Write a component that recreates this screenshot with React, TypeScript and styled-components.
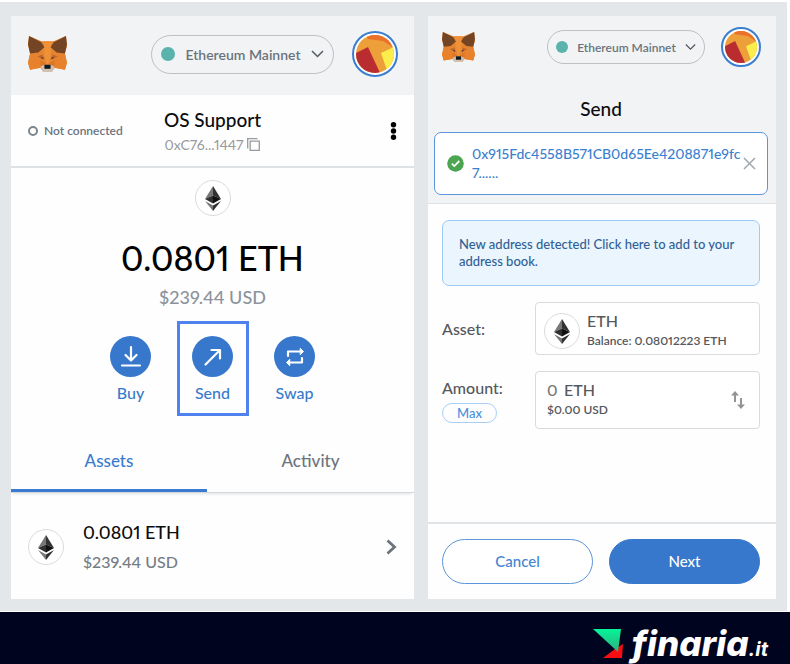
import React from "react";
import styled, { createGlobalStyle, css } from "styled-components";

const GlobalStyle = createGlobalStyle`
  *, *::before, *::after { box-sizing: border-box; }
  body {
    margin: 0;
    background: #fff;
    font-family: Lato, "Open Sans", sans-serif;
    font-variant-numeric: proportional-nums;
    color: #0b0c0e;
  }
  button, input { font: inherit; color: inherit; }
  button { padding: 0; border: 0; background: none; cursor: pointer; font-variant-numeric: proportional-nums; }
  h1, h2, p { margin: 0; font-weight: 500; }
  svg { display: block; flex: none; }
`;

const Frame = styled.main`
  display: grid;
  grid-template-columns: 403fr 348fr;
  gap: 14px;
  margin: 2px 3px 1px 0;
  padding: 14px 11px 12px;
  background: #e3e7ea;
`;

const Panel = styled.section`
  display: flex;
  flex-direction: column;
  min-width: 0;
  background: #fefefe;
`;

const TopBar = styled.header<{ $compact?: boolean }>`
  display: flex;
  align-items: center;
  justify-content: space-between;
  background: #f2f3f4;
  padding: ${(p) => (p.$compact ? "11px 15px 13px 14px" : "15px 16px 18px 17px")};
`;

const TopControls = styled.div<{ $compact?: boolean }>`
  display: flex;
  align-items: center;
  gap: ${(p) => (p.$compact ? 16 : 18)}px;
`;

const NetworkButton = styled.button<{ $compact?: boolean }>`
  display: flex;
  align-items: center;
  justify-content: space-between;
  border: 1px solid #bbc0c5;
  border-radius: 20px;
  color: #6a737d;
  font-weight: 600;
  ${(p) =>
    p.$compact
      ? css`width: 158px; height: 34px; padding: 0 8px; font-size: 12px;`
      : css`width: 183px; height: 39px; padding: 0 9px; font-size: 14px;`}
`;

const NetworkDot = styled.span<{ $compact?: boolean }>`
  width: ${(p) => (p.$compact ? 12 : 14)}px;
  height: ${(p) => (p.$compact ? 12 : 14)}px;
  border-radius: 50%;
  background: #5bb3ad;
`;

const AvatarButton = styled.button<{ $compact?: boolean }>`
  width: ${(p) => (p.$compact ? 40 : 46)}px;
  height: ${(p) => (p.$compact ? 40 : 46)}px;
  padding: 2px;
  border: 2px solid #3b7ed0;
  border-radius: 50%;
  background: #fff;
  overflow: hidden;
`;

const AccountBar = styled.div`
  display: grid;
  grid-template-columns: 1fr auto 1fr;
  align-items: center;
  height: 73px;
  padding: 0 17px;
  border-bottom: 2px solid #dfe2e4;
`;

const Status = styled.span`
  display: flex;
  align-items: center;
  gap: 6px;
  font-size: 12px;
  color: #6a737d;
  font-weight: 600;
  &::before {
    content: "";
    width: 10px;
    height: 10px;
    border: 2px solid #7d858d;
    border-radius: 50%;
  }
`;

const Account = styled.button`
  display: flex;
  flex-direction: column;
  align-items: center;
  padding-top: 2px;
`;

const AccountName = styled.span`
  font-size: 19px;
  line-height: 26px;
  font-weight: 500;
`;

const AccountAddress = styled.span`
  display: flex;
  align-items: center;
  gap: 4px;
  font-size: 14px;
  line-height: 24px;
  color: #989a9d;
`;

const MenuButton = styled.button`
  justify-self: end;
`;

const Overview = styled.div`
  display: flex;
  flex-direction: column;
  align-items: center;
  padding-top: 12px;
`;

const TokenCircle = styled.span`
  display: grid;
  place-items: center;
  flex: none;
  width: 36px;
  height: 36px;
  border: 1px solid #d9dbdd;
  border-radius: 50%;
  background: #fff;
`;

const Balance = styled.p`
  margin-top: 19px;
  font-size: 34px;
  line-height: 46px;
  font-weight: 500;
  color: #000;
`;

const FiatBalance = styled.p`
  margin-top: 4px;
  font-size: 18px;
  line-height: 24px;
  font-weight: 500;
  color: #8b939b;
`;

const Actions = styled.div`
  display: flex;
  justify-content: center;
  gap: 10px;
  margin-top: 12px;
`;

const ActionButton = styled.button<{ $selected?: boolean }>`
  display: flex;
  flex-direction: column;
  align-items: center;
  width: 72px;
  height: 95px;
  padding-top: 12px;
  border: 3px solid ${(p) => (p.$selected ? "#4f82ef" : "transparent")};
  color: #397bcb;
  font-size: 16px;
  line-height: 22px;
  font-weight: 500;
`;

const ActionIcon = styled.span`
  display: grid;
  place-items: center;
  width: 41px;
  height: 41px;
  margin-bottom: 5px;
  border-radius: 50%;
  background: #3778cd;
`;

const Tabs = styled.div`
  display: grid;
  grid-template-columns: 196fr 207fr;
  margin-top: 15px;
  border-bottom: 1px solid #d5d8da;
  box-shadow: 0 3px 3px -2px #dfe2e4;
`;

const Tab = styled.button<{ $active?: boolean }>`
  height: 61px;
  font-size: 17px;
  font-weight: 500;
  color: ${(p) => (p.$active ? "#397bd0" : "#6d747c")};
  border-bottom: 3px solid ${(p) => (p.$active ? "#397bd0" : "transparent")};
`;

const AssetRow = styled.button`
  display: flex;
  align-items: center;
  gap: 19px;
  height: 106px;
  padding: 2px 17px 0;
  text-align: left;
`;

const AssetText = styled.span`
  display: flex;
  flex: 1;
  flex-direction: column;
`;

const AssetAmount = styled.span`
  font-size: 18px;
  line-height: 29px;
  font-weight: 500;
  color: #0b0c0e;
`;

const AssetFiat = styled.span`
  font-size: 16px;
  line-height: 29px;
  font-weight: 500;
  color: #747c84;
`;

const Recipient = styled.div`
  padding: 0 8px 8px 6px;
  background: #f2f3f4;
  border-bottom: 1px solid #dfe1e3;
`;

const SendTitle = styled.h1`
  margin: 16px 0 10px;
  font-size: 19px;
  line-height: 26px;
  text-align: center;
`;

const RecipientBox = styled.div`
  display: flex;
  align-items: center;
  gap: 8px;
  height: 63px;
  padding: 0 11px 0 12px;
  border: 1px solid #5b95dc;
  border-radius: 7px;
  background: #fff;
`;

const RecipientAddress = styled.span`
  flex: 1;
  min-width: 0;
  padding-bottom: 2px;
  color: #3b7fd0;
  font-size: 14px;
  line-height: 19px;
  font-weight: 500;
`;

const SendForm = styled.form`
  display: flex;
  flex: 1;
  flex-direction: column;
`;

const Fields = styled.div`
  display: flex;
  flex: 1;
  flex-direction: column;
  gap: 16px;
  padding: 16px 16px 0 14px;
`;

const Notice = styled.button`
  height: 66px;
  padding: 0 16px;
  border: 1px solid #9ecbf3;
  border-radius: 7px;
  background: #eaf5fe;
  color: #315f95;
  font-size: 13px;
  line-height: 17px;
  font-weight: 500;
  text-align: left;
`;

const Field = styled.div`
  display: grid;
  grid-template-columns: 93fr 225fr;
  align-items: center;
`;

const FieldLabel = styled.label`
  display: block;
  font-size: 16px;
  line-height: 20px;
  font-weight: 500;
  color: #55585c;
`;

const MaxButton = styled.button`
  display: block;
  width: 55px;
  height: 20px;
  margin-top: 5px;
  border: 1px solid #a9cef3;
  border-radius: 10px;
  color: #4a8fda;
  font-size: 13px;
  line-height: 16px;
  font-weight: 500;
`;

const fieldBox = css`
  display: flex;
  align-items: center;
  min-width: 0;
  border: 1px solid #d9dbdd;
  border-radius: 4px;
  background: #fff;
  color: #55585c;
  text-align: left;
`;

const AssetPicker = styled.button`
  ${fieldBox}
  gap: 7px;
  height: 53px;
  padding: 5px 8px 0;
`;

const AmountBox = styled.div`
  ${fieldBox}
  justify-content: space-between;
  height: 58px;
  padding: 0 14px 0 11px;
`;

const FieldText = styled.span`
  display: flex;
  flex-direction: column;
`;

const Primary = styled.span`
  display: flex;
  font-size: 16px;
  line-height: 20px;
  font-weight: 500;
`;

const Secondary = styled.span`
  font-size: 12px;
  line-height: 20px;
  font-weight: 600;
`;

const AmountInput = styled.input`
  width: 17px;
  padding: 0;
  border: 0;
  outline: 0;
  background: none;
  color: #777;
`;

const FormFooter = styled.footer`
  display: grid;
  grid-template-columns: 1fr 1fr;
  gap: 16px;
  padding: 15px 16px 15px 14px;
  border-top: 2px solid #e1e4e6;
`;

const FormButton = styled.button<{ $primary?: boolean }>`
  height: 45px;
  padding-bottom: 2px;
  border: 1px solid ${(p) => (p.$primary ? "#3778cd" : "#5b95dc")};
  border-radius: 23px;
  background: ${(p) => (p.$primary ? "#3778cd" : "#fff")};
  color: ${(p) => (p.$primary ? "#fff" : "#4584d2")};
  font-size: 15px;
  font-weight: 500;
`;

const BrandBar = styled.footer`
  display: flex;
  align-items: center;
  justify-content: flex-end;
  gap: 8px;
  min-height: 52px;
  padding: 11px 22px 0 0;
  background: #01041f;
  color: #fff;
`;

const BrandName = styled.span`
  font-family: Inter, sans-serif;
  font-size: 35px;
  line-height: 41px;
  font-weight: 800;
  font-style: italic;
  small {
    font-size: 20px;
    line-height: 20px;
    font-weight: 700;
  }
`;

function Fox({ size }: { size: number }) {
  return (
    <svg width={size} height={size * 0.92} viewBox="0 0 38 35" aria-label="MetaMask" role="img">
      <path d="M1 0L13 5H25L37 0L38 10L36 17L38 26L36 33L26 31L23 35H15L12 31L2 33L0 26L2 17L0 9Z" fill="#e8862f" />
      <path d="M2 17L14 12L15 22L0 26ZM36 17L24 12L23 22L38 26Z" fill="#e58330" />
      <path d="M0 26L12 23L12 31L2 33ZM38 26L26 23L26 31L36 33Z" fill="#e9802a" />
      <path d="M12 23L18 27L12 31ZM26 23L20 27L26 31Z" fill="#dd7728" />
      <path d="M15 5H23L22 17L20 28H18L16 17Z" fill="#ee9239" />
      <path d="M1 0L13 6L16 11L10 16L2 17L0 8ZM37 0L25 6L22 11L28 16L36 17L38 8Z" fill="#734525" />
      <path d="M9 20L14 18L16 23ZM29 20L24 18L22 23Z" fill="#c4652a" />
      <path d="M12 21L15 21L15 23ZM26 21L23 21L23 23Z" fill="#4b3d38" />
      <path d="M12 30L16 28H22L26 30L23 35H15Z" fill="#cfc1b4" />
      <path d="M16 28H22L22 32H16Z" fill="#15181b" />
    </svg>
  );
}

function AvatarArt() {
  return (
    <svg width="100%" height="100%" viewBox="0 0 38 38" aria-hidden="true">
      <defs>
        <clipPath id="avatar-disc"><circle cx="19" cy="19" r="19" /></clipPath>
      </defs>
      <g clipPath="url(#avatar-disc)">
        <path d="M0 0H38V38H0Z" fill="#eda03a" />
        <path d="M10 0H38V13L27 6L12 4Z" fill="#ea702b" />
        <path d="M0 18L12 12L25 40H0Z" fill="#b92d30" />
        <path d="M25 18L38 12V36L32 38Z" fill="#fbee4c" />
      </g>
    </svg>
  );
}

function EthMark() {
  return (
    <svg width="16" height="25" viewBox="0 0 16 25" aria-hidden="true">
      <path d="M8 0L0 13L8 9.5Z" fill="#777" />
      <path d="M8 0L16 13L8 9.5Z" fill="#333" />
      <path d="M0 13L8 9.5V17.5Z" fill="#303030" />
      <path d="M16 13L8 9.5V17.5Z" fill="#111" />
      <path d="M0 15L8 19.5V25Z" fill="#777" />
      <path d="M16 15L8 19.5V25Z" fill="#303030" />
    </svg>
  );
}

function Token() {
  return <TokenCircle><EthMark /></TokenCircle>;
}

function WalletTopBar({ compact = false }: { compact?: boolean }) {
  return (
    <TopBar $compact={compact}>
      <Fox size={compact ? 33 : 39} />
      <TopControls $compact={compact}>
        <NetworkButton type="button" $compact={compact} aria-haspopup="listbox">
          <NetworkDot $compact={compact} />
          Ethereum Mainnet
          <svg width={compact ? 11 : 13} height="8" viewBox="0 0 13 8" fill="none" stroke="#535a61" strokeWidth="1.5" aria-hidden="true">
            <path d="M1 1L6.5 6.5L12 1" />
          </svg>
        </NetworkButton>
        <AvatarButton type="button" $compact={compact} aria-label="Account menu">
          <AvatarArt />
        </AvatarButton>
      </TopControls>
    </TopBar>
  );
}

const actions = [
  { label: "Buy", path: "M12 2V15M6.5 10L12 15.5L17.5 10M3 20.5H21" },
  { label: "Send", path: "M4.5 19.5L18.5 5.5M10.5 5H19V13.5", selected: true },
  { label: "Swap", path: "M5 11V6.5H19M5 17.5H19V13" },
];

function WalletPanel() {
  return (
    <Panel aria-label="Wallet">
      <WalletTopBar />
      <AccountBar>
        <Status>Not connected</Status>
        <Account type="button">
          <AccountName>OS Support</AccountName>
          <AccountAddress>
            0xC76...1447
            <svg width="13" height="13" viewBox="0 0 13 13" fill="none" stroke="#989a9d" strokeWidth="1.3" aria-hidden="true">
              <path d="M10.5 .7H.7V10.5M3.2 3.2H12.3V12.3H3.2Z" />
            </svg>
          </AccountAddress>
        </Account>
        <MenuButton type="button" aria-label="Account options">
          <svg width="7" height="18" viewBox="0 0 7 18" aria-hidden="true">
            <circle cx="3.5" cy="2.8" r="2.7" />
            <circle cx="3.5" cy="9" r="2.7" />
            <circle cx="3.5" cy="15.2" r="2.7" />
          </svg>
        </MenuButton>
      </AccountBar>
      <Overview>
        <Token />
        <Balance>0.0801 ETH</Balance>
        <FiatBalance>$239.44 USD</FiatBalance>
        <Actions>
          {actions.map((a) => (
            <ActionButton key={a.label} type="button" $selected={a.selected}>
              <ActionIcon>
                <svg width="24" height="24" viewBox="0 0 24 24" fill="none" stroke="#fff" strokeWidth="2.2" strokeLinecap="round" strokeLinejoin="round" aria-hidden="true">
                  <path d={a.path} />
                  {a.label === "Swap" && <path d="M17.5 3.5L20.5 6.5L17.5 9.5ZM6.5 14.5L3.5 17.5L6.5 20.5Z" fill="#fff" strokeWidth="1" />}
                </svg>
              </ActionIcon>
              {a.label}
            </ActionButton>
          ))}
        </Actions>
      </Overview>
      <Tabs role="tablist">
        <Tab type="button" role="tab" aria-selected="true" $active>Assets</Tab>
        <Tab type="button" role="tab" aria-selected="false">Activity</Tab>
      </Tabs>
      <AssetRow type="button">
        <Token />
        <AssetText>
          <AssetAmount>0.0801 ETH</AssetAmount>
          <AssetFiat>$239.44 USD</AssetFiat>
        </AssetText>
        <svg width="11" height="16" viewBox="0 0 11 16" fill="none" stroke="#6a737d" strokeWidth="2.8" aria-hidden="true">
          <path d="M1.5 1.5L8.5 8L1.5 14.5" />
        </svg>
      </AssetRow>
    </Panel>
  );
}

function SendPanel() {
  return (
    <Panel aria-label="Send">
      <WalletTopBar compact />
      <Recipient>
        <SendTitle>Send</SendTitle>
        <RecipientBox>
          <svg width="17" height="17" viewBox="0 0 17 17" fill="none" aria-hidden="true">
            <circle cx="8.5" cy="8.5" r="8.3" fill="#4ca550" />
            <path d="M4.8 8.7L7.3 11.1L12.3 6" stroke="#fff" strokeWidth="1.8" />
          </svg>
          <RecipientAddress>0x915Fdc4558B571CB0d65Ee4208871e9fc<wbr />7......</RecipientAddress>
          <button type="button" aria-label="Clear recipient">
            <svg width="13" height="13" viewBox="0 0 13 13" stroke="#a0a6ad" strokeWidth="1.5" aria-hidden="true">
              <path d="M1 1L12 12M12 1L1 12" />
            </svg>
          </button>
        </RecipientBox>
      </Recipient>
      <SendForm onSubmit={(e) => e.preventDefault()}>
        <Fields>
          <Notice type="button">New address detected! Click here to add to your address book.</Notice>
          <Field>
            <FieldLabel htmlFor="asset">Asset:</FieldLabel>
            <AssetPicker type="button" id="asset">
              <Token />
              <FieldText>
                <Primary>ETH</Primary>
                <Secondary>Balance: 0.08012223 ETH</Secondary>
              </FieldText>
            </AssetPicker>
          </Field>
          <Field>
            <div>
              <FieldLabel htmlFor="amount">Amount:</FieldLabel>
              <MaxButton type="button">Max</MaxButton>
            </div>
            <AmountBox>
              <FieldText>
                <Primary>
                  <AmountInput id="amount" defaultValue="0" inputMode="decimal" />
                  ETH
                </Primary>
                <Secondary>$0.00 USD</Secondary>
              </FieldText>
              <button type="button" aria-label="Switch currency">
                <svg width="14" height="18" viewBox="0 0 14 18" fill="#929497" aria-hidden="true">
                  <path d="M4 0L8 4.5H5V11H3V4.5H0ZM9 7H11V13.5H14L10 18L6 13.5H9Z" />
                </svg>
              </button>
            </AmountBox>
          </Field>
        </Fields>
        <FormFooter>
          <FormButton type="button">Cancel</FormButton>
          <FormButton type="submit" $primary>Next</FormButton>
        </FormFooter>
      </SendForm>
    </Panel>
  );
}

export default function App() {
  return (
    <>
      <GlobalStyle />
      <Frame>
        <WalletPanel />
        <SendPanel />
      </Frame>
      <BrandBar>
        <svg width="31" height="30" viewBox="0 0 31 30" aria-hidden="true">
          <defs>
            <linearGradient id="brand-green" x1="0" y1="0" x2="0" y2="1">
              <stop offset="0" stopColor="#05f59a" />
              <stop offset="1" stopColor="#2fae7b" />
            </linearGradient>
          </defs>
          <path d="M10 29L22 20L30 15L29 29Z" fill="#f80d12" />
          <path d="M0 0H28L25 23Z" fill="url(#brand-green)" />
        </svg>
        <BrandName>finaria<small>.it</small></BrandName>
      </BrandBar>
    </>
  );
}
